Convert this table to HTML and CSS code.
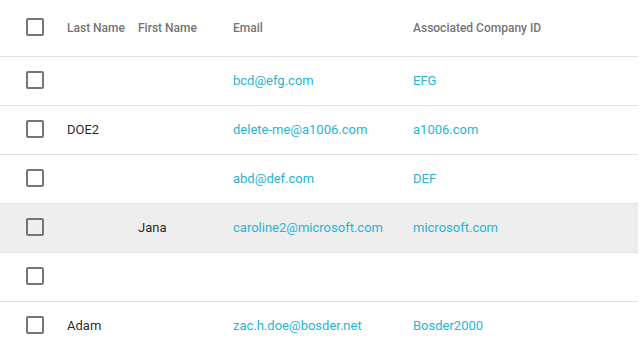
FILE: index.html
```html
<!DOCTYPE html>
<html>
<head>
<meta charset="utf-8">
<link rel="stylesheet" href="styles.css">
</head>
<body>
<table class="grid">
  <colgroup>
    <col class="c-check">
    <col class="c-last">
    <col class="c-first">
    <col class="c-email">
    <col class="c-company">
  </colgroup>
  <thead>
    <tr class="head">
      <th class="check"><span class="box"></span></th>
      <th>Last Name</th>
      <th>First Name</th>
      <th>Email</th>
      <th>Associated Company ID</th>
    </tr>
  </thead>
  <tbody>
    <tr>
      <td><span class="box"></span></td>
      <td></td>
      <td></td>
      <td class="link">bcd@efg.com</td>
      <td class="link">EFG</td>
    </tr>
    <tr>
      <td><span class="box"></span></td>
      <td>DOE2</td>
      <td></td>
      <td class="link">delete-me@a1006.com</td>
      <td class="link">a1006.com</td>
    </tr>
    <tr>
      <td><span class="box"></span></td>
      <td></td>
      <td></td>
      <td class="link">abd@def.com</td>
      <td class="link">DEF</td>
    </tr>
    <tr class="hover">
      <td><span class="box"></span></td>
      <td></td>
      <td>Jana</td>
      <td class="link">caroline2@microsoft.com</td>
      <td class="link">microsoft.com</td>
    </tr>
    <tr>
      <td><span class="box"></span></td>
      <td></td>
      <td></td>
      <td></td>
      <td></td>
    </tr>
    <tr>
      <td><span class="box"></span></td>
      <td>Adam</td>
      <td></td>
      <td class="link">zac.h.doe@bosder.net</td>
      <td class="link">Bosder2000</td>
    </tr>
  </tbody>
</table>
</body>
</html>
```
FILE: styles.css
```css
html, body {
  margin: 0;
  padding: 0;
  background: #ffffff;
}
body {
  font-family: Roboto, "Liberation Sans", sans-serif;
  color: rgba(0, 0, 0, 0.87);
}
.grid {
  width: 638px;
  border-collapse: collapse;
  table-layout: fixed;
}
.c-check { width: 67px; }
.c-last { width: 71px; }
.c-first { width: 95px; }
.c-email { width: 180px; }
.grid tr {
  border-bottom: 1px solid #e0e0e0;
}
.grid th, .grid td {
  padding: 0;
  text-align: left;
  vertical-align: middle;
  white-space: nowrap;
  overflow: hidden;
}
.grid th {
  height: 56px;
  font-size: 12px;
  font-weight: 500;
  color: #757575;
}
.grid th.check {
  height: 54px;
  padding-bottom: 2px;
}
.grid td {
  height: 46px;
  padding-bottom: 2px;
  font-size: 13px;
}
.grid th:first-child, .grid td:first-child {
  padding-left: 26px;
}
.box {
  display: block;
  width: 18px;
  height: 18px;
  box-sizing: border-box;
  border: 2px solid #757575;
  border-radius: 2px;
}
.link {
  color: #26b5d3;
}
.hover {
  background: #eeeeee;
}
```
